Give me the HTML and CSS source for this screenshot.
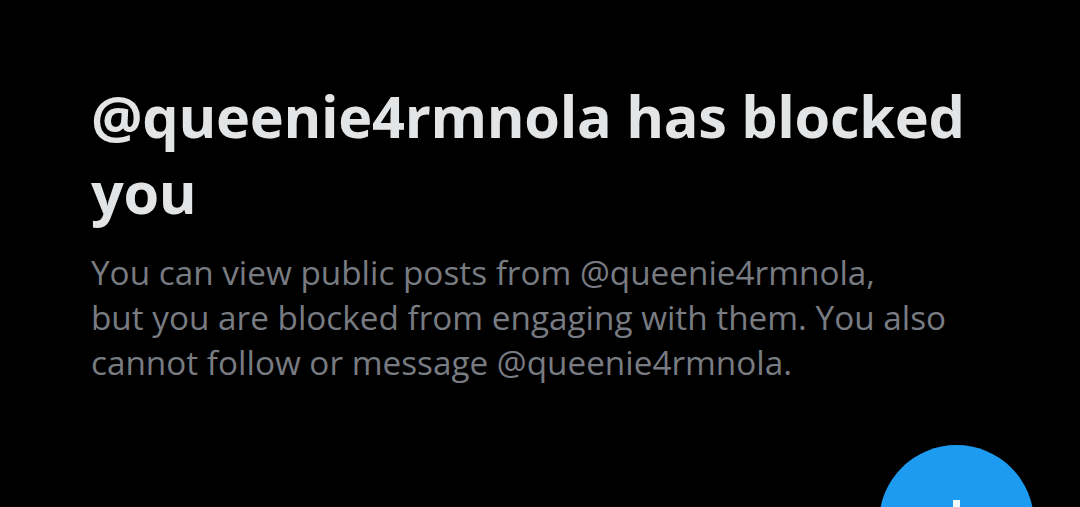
FILE: index.html
```html
<!DOCTYPE html>
<html>
<head>
<meta charset="utf-8">
<link rel="stylesheet" href="styles.css">
</head>
<body>
<main class="page">
  <section class="notice">
    <h1 class="title">@queenie4rmnola has blocked you</h1>
    <p class="desc">You can view public posts from @queenie4rmnola,<br>but you are blocked from engaging with them. You also cannot follow or message @queenie4rmnola.</p>
  </section>
  <button class="fab" aria-label="New post"><span class="plus"></span></button>
</main>
</body>
</html>
```

FILE: styles.css
```css
html, body {
  margin: 0;
  padding: 0;
  background: #000;
  width: 1080px;
  height: 507px;
  overflow: hidden;
}
.page {
  position: relative;
  width: 1080px;
  height: 507px;
  box-sizing: border-box;
  padding: 78px 60px 0 91px;
  overflow: hidden;
}
.notice {
  width: 890px;
  display: flex;
  flex-direction: column;
  gap: 20px;
}
.title {
  margin: 0;
  font-family: "Open Sans", sans-serif;
  font-weight: 700;
  font-size: 57.6px;
  line-height: 76px;
  color: #e2e4e5;
  letter-spacing: -0.3px;
}
.desc {
  margin: 0;
  width: 870px;
  font-family: "Open Sans", sans-serif;
  font-weight: 400;
  font-size: 33.3px;
  line-height: 45px;
  color: #787c82;
}
.fab {
  position: absolute;
  left: 879px;
  top: 445px;
  width: 155px;
  height: 155px;
  border-radius: 50%;
  border: none;
  background: #1d9bf0;
  padding: 0;
}
.plus {
  position: absolute;
  left: 74px;
  top: 55px;
  width: 7px;
  height: 40px;
  background: #f0faff;
}
```
